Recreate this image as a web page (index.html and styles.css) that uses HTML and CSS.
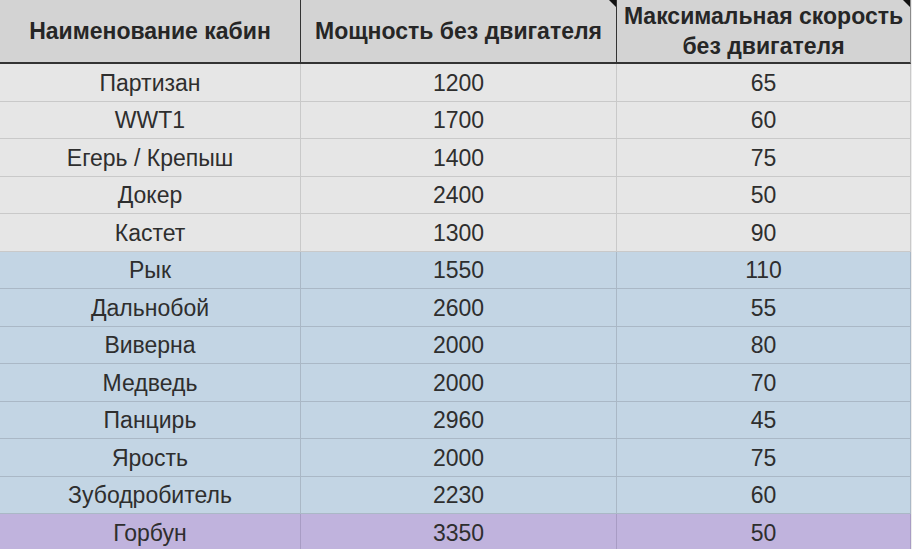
FILE: index.html
```html
<!DOCTYPE html>
<html lang="ru">
<head>
<meta charset="utf-8">
<link rel="stylesheet" href="styles.css">
</head>
<body>
<div class="sheet">
  <div class="hcell">Наименование кабин</div>
  <div class="hcell note">Мощность без двигателя</div>
  <div class="hcell note last">Максимальная скорость<br>без двигателя</div>

  <div class="cell grey">Партизан</div><div class="cell grey">1200</div><div class="cell grey last">65</div>
  <div class="cell grey">WWT1</div><div class="cell grey">1700</div><div class="cell grey last">60</div>
  <div class="cell grey">Егерь / Крепыш</div><div class="cell grey">1400</div><div class="cell grey last">75</div>
  <div class="cell grey">Докер</div><div class="cell grey">2400</div><div class="cell grey last">50</div>
  <div class="cell grey">Кастет</div><div class="cell grey">1300</div><div class="cell grey last">90</div>

  <div class="cell blue">Рык</div><div class="cell blue">1550</div><div class="cell blue last">110</div>
  <div class="cell blue">Дальнобой</div><div class="cell blue">2600</div><div class="cell blue last">55</div>
  <div class="cell blue">Виверна</div><div class="cell blue">2000</div><div class="cell blue last">80</div>
  <div class="cell blue">Медведь</div><div class="cell blue">2000</div><div class="cell blue last">70</div>
  <div class="cell blue">Панцирь</div><div class="cell blue">2960</div><div class="cell blue last">45</div>
  <div class="cell blue">Ярость</div><div class="cell blue">2000</div><div class="cell blue last">75</div>
  <div class="cell blue">Зубодробитель</div><div class="cell blue">2230</div><div class="cell blue last">60</div>

  <div class="cell purple">Горбун</div><div class="cell purple">3350</div><div class="cell purple last">50</div>
</div>
</body>
</html>
```

FILE: styles.css
```css
html, body {
  margin: 0;
  padding: 0;
  background: #ececec;
}
body {
  width: 912px;
  height: 549px;
  overflow: hidden;
  font-family: "Liberation Sans", Arial, sans-serif;
  color: #2e2e2e;
}
.sheet {
  display: grid;
  grid-template-columns: 301px 316px 294px;
  grid-template-rows: 64px;
  grid-auto-rows: 37.5px;
  width: 911px;
}
.hcell {
  position: relative;
  background: #d3d3d3;
  border-right: 1px solid #333;
  border-bottom: 2px solid #333;
  display: flex;
  align-items: center;
  justify-content: center;
  text-align: center;
  font-weight: bold;
  font-size: 23px;
  line-height: 30px;
  color: #262626;
  padding-bottom: 1px;
}
.hcell.last {
  border-right: 1px solid #8a8a8a;
}
.note::after {
  content: "";
  position: absolute;
  top: 0;
  right: 0;
  width: 0;
  height: 0;
  border-top: 7px solid #111;
  border-left: 7px solid transparent;
}
.cell {
  display: flex;
  align-items: center;
  justify-content: center;
  font-size: 23px;
  border-right: 1px solid #c9c9c9;
  border-bottom: 1px solid #c9c9c9;
  padding-top: 2px;
}
.grey {
  background: #e6e6e6;
}
.blue {
  background: #c3d5e4;
  border-color: #aab8c6;
}
.purple {
  background: #c0b3dd;
  border-color: #a89cc4;
}
```
